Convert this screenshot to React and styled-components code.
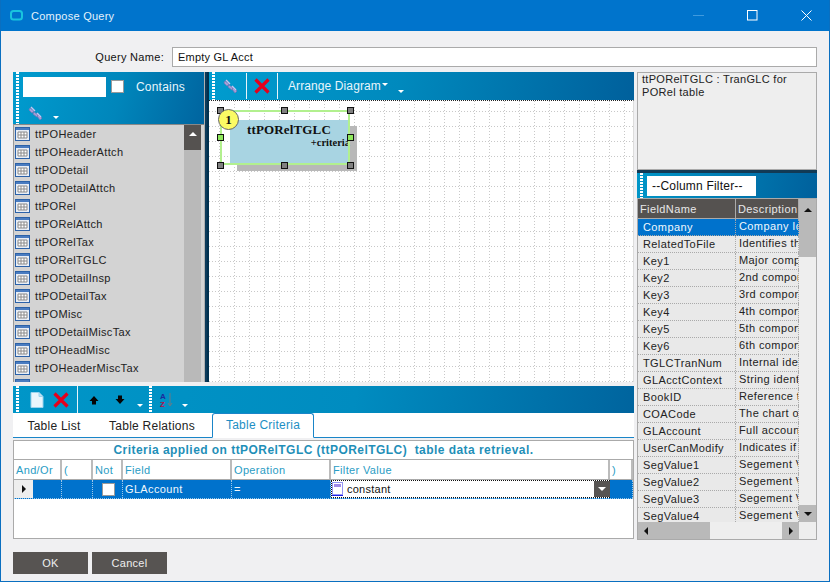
import React from "react";
import styled, { createGlobalStyle } from "styled-components";

const Global = createGlobalStyle`
  html, body { margin: 0; padding: 0; background: #f0f0f2; }
  body { font-family: "Liberation Sans", Arial, sans-serif; font-size: 11px; color: #111; overflow: hidden; }
`;
const Win = styled.div`
  width: 830px; height: 582px; box-sizing: border-box; display: flex; flex-direction: column;
  border: 1px solid #0a6fc0; border-top: 0; background: #f0f0f2; overflow: hidden;
`;
const TitleBar = styled.div`
  height: 31px; flex: none; background: #0074cc; color: #fff; display: flex; align-items: center;
  font-size: 11px; padding-left: 9px; gap: 8px; letter-spacing: .25px;
`;
const TitleText = styled.span` flex: 1; color: #e4f2fb; `;
const WinBtn = styled.span` width: 46px; height: 31px; display: flex; align-items: center; justify-content: center; `;
const Content = styled.div` flex: 1; display: flex; flex-direction: column; padding: 0 12px; min-height: 0; `;
const NameRow = styled.div`
  height: 41px; flex: none; display: flex; align-items: center; justify-content: flex-end; gap: 8px; padding-top: 11px; box-sizing: border-box;
`;
const NameLabel = styled.span` letter-spacing: .3px; `;
const NameInput = styled.div`
  width: 645px; height: 20px; box-sizing: border-box; border: 1px solid #aaa; background: #fff;
  display: flex; align-items: center; padding-left: 5px; letter-spacing: .2px;
`;
const Main = styled.div` flex: 1; display: grid; grid-template-columns: 621px 3px 180px; min-height: 0; `;
const LeftCol = styled.div` display: flex; flex-direction: column; min-height: 0; `;
const TopPanes = styled.div` height: 310px; flex: none; display: flex; `;
const TableSide = styled.div` width: 191px; flex: none; display: flex; flex-direction: column; `;
const Toolbar = styled.div`
  position: relative; display: flex; align-items: center; height: ${p => p.$h}px; flex: none; box-sizing: border-box;
  padding-left: 3px;
  background: linear-gradient(100deg, #009ccf 0%, #0089bd 45%, #00609c 100%);
  color: #e8f6fc;
`;
const Grip = styled.i`
  display: block; width: 3px; align-self: stretch; flex: none;
  background: repeating-linear-gradient(180deg, #fff 0 2px, transparent 2px 3px);
`;
const FilterTop = styled.div`
  height: 52px; flex: none; display: grid; grid-template-rows: 26px 26px; grid-template-columns: 3px 1fr; padding-left: 3px; box-sizing: border-box;
  background: linear-gradient(105deg, #009ccf 0%, #0086bb 55%, #00649f 100%); color: #e8f6fc;
`;
const GripTall = styled(Grip)` grid-row: 1 / 3; `;
const FilterRow = styled.div` display: flex; align-items: center; padding-left: 4px; padding-top: 3px; `;
const SearchBox = styled.div` width: 83px; height: 20px; background: #fff; `;
const Check = styled.span`
  display: inline-block; box-sizing: border-box; width: 13px; height: 13px; background: #fff; border: 1px solid #9a9a9a;
  margin: ${p => p.$m || 0};
`;
const ContainsLabel = styled.span` margin-left: 12px; font-size: 12px; letter-spacing: .2px; `;
const Drop = styled.span`
  display: inline-block; width: 0; height: 0; border-left: 3px solid transparent; border-right: 3px solid transparent; border-top: 3px solid #fff;
  margin: ${p => p.$m || 0};
`;
const ListWrap = styled.div`
  flex: 1; min-height: 0; display: flex; background: #d3d3d3; border-left: 1px solid #999; border-top: 1px solid #888; overflow: hidden; position: relative; padding-right: 3px;
`;
const ListItems = styled.div` flex: 1; overflow: hidden; padding-left: 1px; `;
const ListItem = styled.div`
  height: 18px; display: flex; align-items: center; gap: 5px; letter-spacing: .35px; color: #222;
`;
const VScroll = styled.div` width: 17px; flex: none; background: #b9b9b9; `;
const VThumb = styled.div`
  height: 25px; background: #555250; display: flex; align-items: flex-start; justify-content: center; padding-top: 7px; box-sizing: border-box;
`;
const ArrowUp = styled.span`
  display: block; width: 0; height: 0; border-left: 4px solid transparent; border-right: 4px solid transparent; border-bottom: 4px solid ${p => p.$c || "#fff"};
`;
const Splitter = styled.div` width: 5px; flex: none; background: linear-gradient(90deg, #b0b0b0 0 1px, #0c3a5a 1px 3px, #00304e 3px); `;
const DiagramSide = styled.div` flex: 1; display: flex; flex-direction: column; min-width: 0; `;
const Sep = styled.i` display: block; width: 1px; height: ${p => p.$h || 24}px; background: #e8f4fa; flex: none; margin: ${p => p.$m || "0"}; `;
const ToolBtn = styled.span` display: inline-flex; align-items: center; justify-content: center; margin: ${p => p.$m || 0}; flex: none; `;
const ToolLabel = styled.span` font-size: 12px; letter-spacing: .1px; `;
const Canvas = styled.div`
  flex: 1; position: relative; background: #fff; overflow: hidden; border-top: 1px dotted #222; border-right: 1px solid #ddd;
`;
const GridSvg = styled.svg` position: absolute; inset: 0; width: 100%; height: 100%; `;
const Node = styled.div`
  position: absolute; left: 21px; top: 19px; width: 120px; height: 45px;
  background: #a8d4e2; box-shadow: 7px 6px 0 #b8b8b8; box-sizing: border-box;
  font-family: "Liberation Serif", serif; font-weight: bold; color: #111;
`;
const NodeTitle = styled.div` font-size: 13px; padding: 2px 0 0 17px; letter-spacing: .15px; `;
const NodeSub = styled.div` font-size: 10.5px; text-align: right; margin-top: -1px; `;
const Select = styled.div`
  position: absolute; left: 11px; top: 9px; width: 130px; height: 55px; border: 1px solid #b2f08e; box-sizing: border-box; border-width: 2px;
`;
const Handle = styled.span`
  position: absolute; width: 7px; height: 7px; box-sizing: border-box; border: 1px solid #111;
  background: ${p => p.$g ? "#8ee85c" : "#808080"}; left: ${p => p.$x}px; top: ${p => p.$y}px;
`;
const Badge = styled.div`
  position: absolute; left: 9px; top: 8px; width: 21px; height: 21px; border-radius: 50%; background: #fbfb64; border: 1px solid #666; box-sizing: border-box;
  font-family: "Liberation Serif", serif; font-weight: bold; font-size: 13px; display: flex; align-items: center; justify-content: center; color: #111;
`;
const BottomBar = styled(Toolbar)` margin-top: 4px; padding-left: 3px; background: linear-gradient(100deg, #0096c8 0%, #008cc0 55%, #00649e 100%); `;
const Tabs = styled.div`
  height: 24px; flex: none; display: flex; align-items: flex-end; border-bottom: 1px solid #1a85c8; background: #fff; position: relative; box-sizing: content-box;
`;
const Tab = styled.div`
  height: ${p => p.$on ? 24 : 22}px; box-sizing: border-box; font-size: 12px; display: flex; align-items: center; justify-content: center; letter-spacing: .25px;
  width: ${p => p.$w}px; margin-left: ${p => p.$ml || 0}px; flex: none;
  color: ${p => p.$on ? "#1d8fc4" : "#222"};
  ${p => p.$on && `border: 1px solid #1a85c8; border-bottom: 1px solid #fff; margin-bottom: -1px; border-radius: 3px 3px 0 0; background:#fff; padding-bottom: 2px; height: 25px;`}
`;
const Criteria = styled.div`
  margin-top: 2px; flex: none; height: 99px; box-sizing: border-box; border: 1px solid #aaa; background: #fff; display: flex; flex-direction: column;
`;
const CritTitle = styled.div`
  height: 19px; flex: none; text-align: center; font-weight: bold; font-size: 12px; line-height: 19px; color: #1f8fb8; letter-spacing: .45px; white-space: pre; box-sizing: border-box;
  border-bottom: 1px solid #aaa;
`;
const cols = "19px 29px 31px 31px 108px 99px 278px 23px";
const CritHead = styled.div`
  display: grid; grid-template-columns: 48px 31px 30px 109px 99px 279px 23px; height: 20px; flex: none; box-sizing: border-box; border-bottom: 1px solid #aaa;
`;
const HeadCell = styled.div`
  border-right: 2px solid #bbb; color: #2a9cc4; padding-left: 2px; display: flex; align-items: center; letter-spacing: .35px; box-sizing: border-box;
`;
const CritRow = styled.div`
  display: grid; grid-template-columns: 19px 29px 31px 30px 109px 99px 279px 23px; height: 19px; flex: none; box-sizing: border-box; background: #0072cc; color: #f2f8fc;
  border-bottom: 1px dotted #99c8ea;
`;
const RowHead = styled.div` background: #eee; display: flex; align-items: center; justify-content: center; `;
const RowCell = styled.div`
  border-right: 1px dotted #9ec8e8; padding-left: 2px; display: flex; align-items: center; letter-spacing: .35px; box-sizing: border-box;
  justify-content: ${p => p.$c ? "center" : "flex-start"};
`;
const Editor = styled.div`
  margin-top: 0; height: 18px; background: #fff; border: 1px dotted #111; border-right: 0; box-sizing: border-box; display: flex; align-items: center; color: #111; letter-spacing: .25px; gap: 4px;
`;
const EditorText = styled.span` flex: 1; `;
const EditorBtn = styled.span` width: 16px; height: 100%; background: #575452; display: flex; align-items: center; justify-content: center; flex: none; `;
const ArrowDown = styled.span`
  display: block; width: 0; height: 0; border-left: 4px solid transparent; border-right: 4px solid transparent; border-top: 4px solid ${p => p.$c || "#fff"};
`;
const RightCol = styled.div` display: flex; flex-direction: column; min-height: 0; grid-column: 3; `;
const Desc = styled.div`
  height: 98px; flex: none; box-sizing: border-box; border: 1px solid #aaa; background: #eee; padding: 0 4px; line-height: 13px; letter-spacing: .3px; color: #222;
`;
const Dark = styled.div` height: 3px; flex: none; background: #123a55; `;
const ColFilter = styled.div`
  height: 25px; flex: none; display: flex; align-items: center; padding-left: 3px; gap: 4px;
  background: linear-gradient(100deg, #0096c8, #00609c); box-sizing: border-box;
`;
const FilterBox = styled.div` width: 109px; height: 20px; background: #fff; color: #111; font-size: 12px; padding-left: 5px; display: flex; align-items: center; letter-spacing: .2px; box-sizing: border-box; margin-top: 1px; `;
const FieldGrid = styled.div`
  flex: none; height: 342px; box-sizing: border-box; border: 1px solid #aaa; background: #eee; display: grid; grid-template-columns: 161px 17px; grid-template-rows: 1fr 17px; margin-top: 0;
`;
const FieldTable = styled.div` display: flex; flex-direction: column; overflow: hidden; min-height: 0; `;
const FHead = styled.div` display: grid; grid-template-columns: 98px 63px; height: 20px; flex: none; background: #555250; color: #e8e8e8; `;
const FHeadCell = styled.div` display: flex; align-items: center; padding-left: 2px; letter-spacing: .4px; border-right: 1px solid #aaa; border-bottom: 1px solid #aaa; white-space: nowrap; overflow: hidden; `;
const FRow = styled.div`
  display: grid; grid-template-columns: 98px 63px; height: 17px; flex: none; box-sizing: border-box; border-bottom: 1px dotted #aaa;
  background: ${p => p.$on ? "#0072cc" : "#e9e9e9"}; color: ${p => p.$on ? "#f0f8fd" : "#222"};
`;
const FCell = styled.div`
  overflow: hidden; white-space: nowrap; letter-spacing: .4px; border-right: 1px dotted #aaa; box-sizing: border-box; padding-left: ${p => p.$d ? 3 : 5}px;
  line-height: ${p => p.$d ? 14 : 17}px;
`;
const SideScroll = styled.div` background: #eee; display: flex; flex-direction: column; justify-content: space-between; `;
const SideThumb = styled.div` height: ${p => p.$h}px; background: #b9b9b9; display: flex; align-items: center; justify-content: center; ${p => p.$top && "padding-bottom: 0; align-items:flex-start; padding-top:9px; box-sizing:border-box;"} `;
const HScroll = styled.div` display: flex; background: #eee; height: 17px; `;
const HLeft = styled.div` width: 72px; background: #b9b9b9; display: flex; align-items: center; padding-left: 6px; box-sizing: border-box; `;
const HGap = styled.div` flex: 1; `;
const HRight = styled.div` width: 17px; background: #b9b9b9; display: flex; align-items: center; justify-content: center; `;
const TriL = styled.span` width: 0; height: 0; border-top: 4px solid transparent; border-bottom: 4px solid transparent; border-right: 4px solid #111; `;
const TriR = styled.span` width: 0; height: 0; border-top: 4px solid transparent; border-bottom: 4px solid transparent; border-left: 4px solid #111; `;
const Footer = styled.div` height: 43px; flex: none; display: flex; gap: 4px; padding-top: 14px; box-sizing: border-box; `;
const FootBtn = styled.div`
  width: 75px; height: 22px; background: #575452; color: #eee; display: flex; align-items: center; justify-content: center; letter-spacing: .3px;
`;

const TableIcon = () => (
  <svg width="15" height="14" viewBox="0 0 15 14" style={{ flex: "none" }}>
    <rect x=".5" y=".5" width="14" height="13" fill="#e8eef6" stroke="#2c62a8" />
    <rect x="1" y="1" width="13" height="2" fill="#4a7cc0" />
    <path d="M3 5h9v6H3zM6 5v6M9 5v6M3 8h9" fill="#fff" stroke="#8a8a8a" />
  </svg>
);
const LinkIcon = () => (
  <svg width="16" height="16" viewBox="0 0 16 16">
    <path d="M2 3l4 3 -2 2-3-3z M6 7l4 3-1 2-4-3z M10 10l4 3-2 2-3-4z" fill="#a6a0d8" stroke="#7a78b8" strokeWidth=".8" />
    <path d="M3 2l4 4M9 8l4 4" stroke="#c8c4ee" strokeWidth="1.4" />
  </svg>
);
const RedX = ({ s = 16 }) => (
  <svg width={s} height={s} viewBox="0 0 16 16">
    <path d="M1.5 1.5L14.5 14.5M14.5 1.5L1.5 14.5" stroke="#e4001c" strokeWidth="3.2" />
  </svg>
);
const Doc = () => (
  <svg width="14" height="16" viewBox="0 0 14 16">
    <path d="M1 .5h8l4 4v11H1z" fill="#eaf6fc" stroke="#9ad4ee" />
    <path d="M9 .5v4h4" fill="#bde0f2" stroke="#9ad4ee" />
  </svg>
);
const BigArrow = ({ down }) => (
  <svg width="10" height="10" viewBox="0 0 10 10" style={down ? { transform: "rotate(180deg)" } : undefined}>
    <path d="M5 1L9.5 6H7v3.5H3V6H.5z" fill="#050505" />
  </svg>
);
const SortIcon = () => (
  <svg width="16" height="16" viewBox="0 0 16 16">
    <text x="1" y="7" fontFamily="Liberation Sans" fontWeight="bold" fontSize="8" fill="#1c2a9c">A</text>
    <text x="1" y="15" fontFamily="Liberation Sans" fontWeight="bold" fontSize="8" fill="#b0104c">Z</text>
    <path d="M11 1v12M9 11l2 3 2-3" stroke="#6a7a86" fill="none" />
  </svg>
);
const CellIcon = () => (
  <svg width="11" height="14" viewBox="0 0 11 14" style={{ flex: "none" }}>
    <path d="M.5.5h10v12H.5z" fill="#fff" stroke="#2a2ae8" strokeDasharray="1 1" />
    <rect x="2" y="2" width="7" height="3" fill="#a08ae8" />
    <path d="M0 13.5h11" stroke="#2020e8" />
  </svg>
);

const tables = ["ttPOHeader","ttPOHeaderAttch","ttPODetail","ttPODetailAttch","ttPORel","ttPORelAttch","ttPORelTax","ttPORelTGLC","ttPODetailInsp","ttPODetailTax","ttPOMisc","ttPODetailMiscTax","ttPOHeadMisc","ttPOHeaderMiscTax","ttPOHeaderTax"];
const fields = [
  ["Company","Company Identifier"],["RelatedToFile","Identifies the table"],["Key1","Major component"],["Key2","2nd component"],["Key3","3rd component"],["Key4","4th component"],["Key5","5th component"],["Key6","6th component"],["TGLCTranNum","Internal identifier"],["GLAcctContext","String identifier"],["BookID","Reference to"],["COACode","The chart of"],["GLAccount","Full account"],["UserCanModify","Indicates if the"],["SegValue1","Segement Value"],["SegValue2","Segement Value"],["SegValue3","Segement Value"],["SegValue4","Segement Value"],
];

export default function App() {
  return (
    <Win>
      <Global />
      <TitleBar>
        <svg width="13" height="11" viewBox="0 0 13 11"><rect x="1" y="1" width="11" height="8.5" rx="2.5" fill="none" stroke="#19c4de" strokeWidth="2" /></svg>
        <TitleText>Compose Query</TitleText>
        <WinBtn><svg width="11" height="11" viewBox="0 0 11 11"><path d="M0 5.5h11" stroke="#3f9ade" /></svg></WinBtn>
        <WinBtn><svg width="11" height="11" viewBox="0 0 11 11"><rect x=".5" y=".5" width="9.5" height="9.5" fill="none" stroke="#fff" /></svg></WinBtn>
        <WinBtn><svg width="11" height="11" viewBox="0 0 11 11"><path d="M.5.5l10 10M10.5.5l-10 10" stroke="#fff" /></svg></WinBtn>
      </TitleBar>
      <Content>
        <NameRow>
          <NameLabel>Query Name:</NameLabel>
          <NameInput>Empty GL Acct</NameInput>
        </NameRow>
        <Main>
          <LeftCol>
            <div style={undefined} />
            <TopPanes>
              <TableSide>
                <FilterTop>
                  <GripTall />
                  <FilterRow><SearchBox /><Check $m="0 0 0 5px" /><ContainsLabel>Contains</ContainsLabel></FilterRow>
                  <FilterRow><ToolBtn $m="0 0 0 5px"><LinkIcon /></ToolBtn><Drop $m="10px 0 0 9px" /></FilterRow>
                </FilterTop>
                <ListWrap>
                  <ListItems>
                    {tables.map(t => <ListItem key={t}><TableIcon />{t}</ListItem>)}
                  </ListItems>
                  <VScroll><VThumb><ArrowUp /></VThumb></VScroll>
                </ListWrap>
              </TableSide>
              <Splitter />
              <DiagramSide>
                <Toolbar $h={28}>
                  <Grip />
                  <ToolBtn $m="0 7px 0 8px"><LinkIcon /></ToolBtn>
                  <Sep $h={26} />
                  <ToolBtn $m="0 7px"><RedX /></ToolBtn>
                  <Sep $h={26} />
                  <ToolLabel style={{ marginLeft: 10 }}>Arrange Diagram</ToolLabel>
                  <Drop $m="-4px 0 0 1px" />
                  <Drop $m="10px 0 0 10px" />
                </Toolbar>
                <Canvas>
                  <GridSvg>
                    <defs>
                      <pattern id="g" x="0" y="0" width="15" height="15" patternUnits="userSpaceOnUse">
                        <path d="M10.5 0v15M0 10.5h15" stroke="#c8c8c8" strokeDasharray="1 2" fill="none" />
                      </pattern>
                    </defs>
                    <rect width="100%" height="100%" fill="url(#g)" />
                  </GridSvg>
                  <Node>
                    <NodeTitle>ttPORelTGLC</NodeTitle>
                    <NodeSub>+criteria</NodeSub>
                  </Node>
                  <Select />
                  <Handle $x={8} $y={6} /><Handle $x={72} $y={6} /><Handle $x={138} $y={6} />
                  <Handle $x={8} $y={33} $g /><Handle $x={138} $y={33} $g />
                  <Handle $x={8} $y={61} /><Handle $x={72} $y={61} /><Handle $x={138} $y={61} />
                  <Badge>1</Badge>
                </Canvas>
              </DiagramSide>
            </TopPanes>
            <BottomBar $h={27}>
              <Grip />
              <ToolBtn $m="0 0 0 11px"><Doc /></ToolBtn>
              <ToolBtn $m="0 0 0 9px"><RedX /></ToolBtn>
              <Sep $h={27} $m="0 0 0 8px" />
              <ToolBtn $m="0 0 0 11px"><BigArrow /></ToolBtn>
              <ToolBtn $m="0 0 0 16px"><BigArrow down /></ToolBtn>
              <Drop $m="12px 0 0 12px" />
              <Grip style={{ marginLeft: 6 }} />
              <ToolBtn $m="0 0 0 7px"><SortIcon /></ToolBtn>
              <Drop $m="12px 0 0 7px" />
            </BottomBar>
            <Tabs>
              <Tab $w={82}>Table List</Tab>
              <Tab $w={114}>Table Relations</Tab>
              <Tab $on $w={102} $ml={3}>Table Criteria</Tab>
            </Tabs>
            <Criteria>
              <CritTitle>{"Criteria applied on ttPORelTGLC (ttPORelTGLC)  table data retrieval."}</CritTitle>
              <CritHead>
                <HeadCell>And/Or</HeadCell><HeadCell>(</HeadCell><HeadCell>Not</HeadCell><HeadCell>Field</HeadCell><HeadCell>Operation</HeadCell><HeadCell>Filter Value</HeadCell><HeadCell>)</HeadCell>
              </CritHead>
              <CritRow>
                <RowHead><TriR /></RowHead>
                <RowCell /><RowCell /><RowCell $c><Check /></RowCell><RowCell>GLAccount</RowCell><RowCell>=</RowCell>
                <RowCell style={{ paddingLeft: 0, border: 0 }}>
                  <Editor style={{ width: "100%" }}><CellIcon /><EditorText>constant</EditorText><EditorBtn><ArrowDown /></EditorBtn></Editor>
                </RowCell>
                <RowCell />
              </CritRow>
            </Criteria>
          </LeftCol>
          <RightCol>
            <Desc>ttPORelTGLC : TranGLC for<br />PORel table</Desc>
            <Dark />
            <ColFilter><Grip /><FilterBox>--Column Filter--</FilterBox></ColFilter>
            <FieldGrid>
              <FieldTable>
                <FHead><FHeadCell>FieldName</FHeadCell><FHeadCell>Description</FHeadCell></FHead>
                {fields.map(([a, b], i) => <FRow key={a} $on={i === 0}><FCell>{a}</FCell><FCell $d>{b}</FCell></FRow>)}
              </FieldTable>
              <SideScroll>
                <SideThumb $h={58} $top><ArrowUp $c="#111" /></SideThumb>
                <SideThumb $h={17}><ArrowDown $c="#111" /></SideThumb>
              </SideScroll>
              <HScroll><HLeft><TriL /></HLeft><HGap /><HRight><TriR /></HRight></HScroll>
              <div />
            </FieldGrid>
          </RightCol>
        </Main>
        <Footer>
          <FootBtn>OK</FootBtn>
          <FootBtn>Cancel</FootBtn>
        </Footer>
      </Content>
    </Win>
  );
}
